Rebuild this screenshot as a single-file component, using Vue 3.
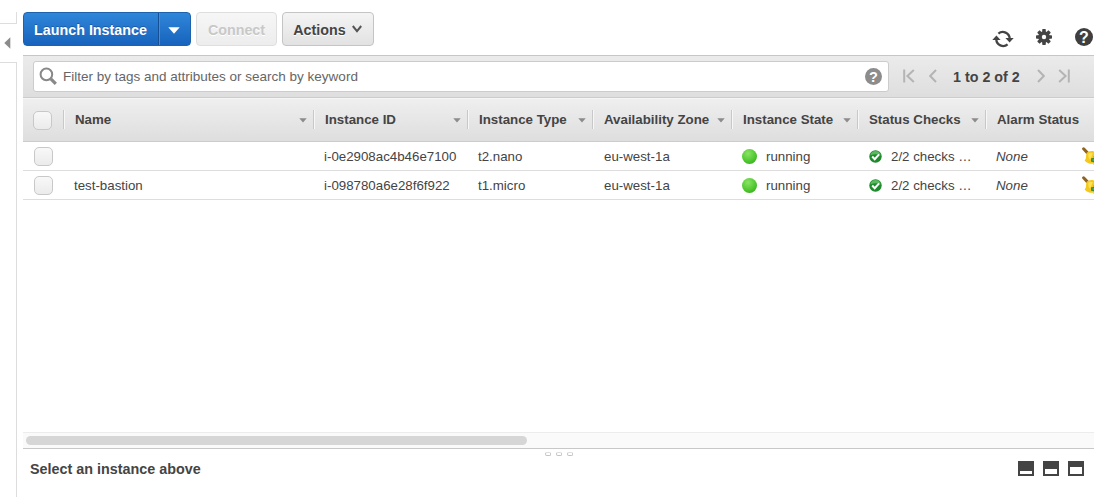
<script setup>
import { ref } from "vue"

const keyword = ref("")
const allChecked = ref(false)

// Table columns, widths in px
const columns = [
  { key: "name", title: "Name", width: 250, sortable: true },
  { key: "id", title: "Instance ID", width: 154, sortable: true },
  { key: "type", title: "Instance Type", width: 125, sortable: true },
  { key: "zone", title: "Availability Zone", width: 139, sortable: true },
  { key: "state", title: "Instance State", width: 126, sortable: true },
  { key: "checks", title: "Status Checks", width: 128, sortable: true },
  { key: "alarm", title: "Alarm Status", width: 160, sortable: false },
]

const instances = ref([
  {
    name: "",
    id: "i-0e2908ac4b46e7100",
    type: "t2.nano",
    zone: "eu-west-1a",
    state: "running",
    checks: "2/2 checks …",
    alarm: "None",
    checked: false,
  },
  {
    name: "test-bastion",
    id: "i-098780a6e28f6f922",
    type: "t1.micro",
    zone: "eu-west-1a",
    state: "running",
    checks: "2/2 checks …",
    alarm: "None",
    checked: false,
  },
])

function toggleAll() {
  instances.value.forEach((it) => (it.checked = allChecked.value))
}
</script>

<template>
  <div class="console">
    <!-- Collapsed side navigation -->
    <aside class="rail">
      <div class="rail-top"></div>
      <button class="rail-handle" type="button" aria-label="Expand">
        <svg width="7" height="12" viewBox="0 0 7 12"><path d="M6.3 0.3v11.4L0.3 6z" fill="#8b8b8b" /></svg>
      </button>
      <div class="rail-rest"></div>
    </aside>

    <main class="main">
      <!-- Toolbar -->
      <div class="toolbar">
        <div class="split-btn">
          <button class="btn-launch" type="button">Launch Instance</button>
          <button class="btn-launch-menu" type="button" aria-label="More">
            <svg width="12" height="7" viewBox="0 0 12 7"><path d="M0.3 0.3h11.4L6 6.7z" fill="#fff" /></svg>
          </button>
        </div>
        <button class="btn btn-disabled" type="button" disabled>Connect</button>
        <button class="btn btn-actions" type="button">
          Actions
          <svg width="10" height="8" viewBox="0 0 10 8"><path d="M0.8 1L5 6.2 9.2 1" fill="none" stroke="#555" stroke-width="2" /></svg>
        </button>

        <div class="tools">
          <svg class="tool-refresh" width="22" height="18" viewBox="0 0 22 18">
            <g fill="none" stroke="#444" stroke-width="2.3">
              <path d="M6.4 3.6A6.9 6.9 0 0 1 17.7 8.6" />
              <path d="M15.6 14.4A6.9 6.9 0 0 1 4.3 9.4" />
            </g>
            <path d="M13.4 8h8.3L17.6 12.4zM0.3 10h8.3L4.4 5.6z" fill="#444" />
          </svg>
          <svg class="tool-gear" width="16" height="16" viewBox="-8 -8 16 16">
            <g fill="#444">
              <rect v-for="n in 4" :key="n" x="-1.8" y="-8" width="3.6" height="16" rx="0.8" :transform="`rotate(${n * 45})`" />
              <circle r="5.8" />
            </g>
            <circle r="2.2" fill="#fff" />
          </svg>
          <span class="help help-dark">?</span>
        </div>
      </div>

      <!-- Filter bar -->
      <div class="filter">
        <label class="search">
          <svg width="19" height="19" viewBox="0 0 19 19">
            <circle cx="7.4" cy="7.4" r="5.8" fill="none" stroke="#888" stroke-width="2" />
            <path d="M11.8 11.8l5 5" stroke="#888" stroke-width="3.2" />
          </svg>
          <input v-model="keyword" type="text" placeholder="Filter by tags and attributes or search by keyword" />
          <span class="help help-light">?</span>
        </label>
        <div class="pager">
          <svg class="pg-first" width="12" height="14" viewBox="0 0 12 14"><path d="M1.2 0.6v12.8M10.8 1L4.4 7l6.4 6" /></svg>
          <svg class="pg-prev" width="8" height="14" viewBox="0 0 8 14"><path d="M7 1L1.2 7 7 13" /></svg>
          <span class="pg-text">1 to 2 of 2</span>
          <svg class="pg-next" width="8" height="14" viewBox="0 0 8 14"><path d="M1 1l5.8 6L1 13" /></svg>
          <svg class="pg-last" width="12" height="14" viewBox="0 0 12 14"><path d="M10.8 0.6v12.8M1.2 1l6.4 6-6.4 6" /></svg>
        </div>
      </div>

      <!-- Table -->
      <div class="table">
        <div class="thead">
          <div class="check-cell">
            <input v-model="allChecked" type="checkbox" class="check" @change="toggleAll" />
          </div>
          <div v-for="col in columns" :key="col.key" class="th" :style="{ width: `${col.width}px` }">
            <span>{{ col.title }}</span>
            <svg v-if="col.sortable" width="8" height="5" viewBox="0 0 8 5"><path d="M0.3 0.3h7.4L4 4.6z" fill="#8b8b8b" /></svg>
          </div>
        </div>

        <div v-for="row in instances" :key="row.id" class="tr">
          <div class="check-cell">
            <input v-model="row.checked" type="checkbox" class="check" />
          </div>
          <div v-for="col in columns" :key="col.key" class="td" :class="`td-${col.key}`" :style="{ width: `${col.width}px` }">
            <span v-if="col.key === 'state'" class="dot"></span>
            <svg v-if="col.key === 'checks'" class="ok" width="13" height="13" viewBox="0 0 13 13">
              <circle cx="6.5" cy="6.5" r="6.2" fill="#1d8a2c" />
              <path d="M1.3 5.4a5.3 5.3 0 0 1 10.4 0C9 4 5 4 1.3 5.4z" fill="#5bb85f" />
              <path d="M3.2 6.6l2.5 2.6 4.4-4.8" fill="none" stroke="#fff" stroke-width="2.1" />
            </svg>
            <span class="value">{{ row[col.key] }}</span>
            <svg v-if="col.key === 'alarm'" class="bell" width="18" height="18" viewBox="0 0 18 18">
              <path d="M1.6 1.8L5 5.4" stroke="#8f6420" stroke-width="3" stroke-linecap="round" />
              <path d="M4.6 6C6 4 9.6 3.4 12 4.4L18 9 11 16.8C7.500 17 4.400 15.600 2.600 13.400 4.800 11.600 3.600 8.400 4.600 6z" fill="#f3c91f" />
              <path d="M6.500 6.400c1.200-1 3-.9 4.300-.2L8 12.800c-1.500-1.500-2-4.300-1.500-6.400z" fill="#ffe156" />
              <path d="M9.200 13h9M13.500 9v9" stroke="#14792a" stroke-width="3.400" />
              <path d="M10.300 13h7M13.500 10.200v6" stroke="#8fdc85" stroke-width="1.200" />
            </svg>
          </div>
        </div>

        <div class="empty"></div>
        <div class="scroll"><div class="thumb"></div></div>
      </div>

      <!-- Details panel -->
      <div class="grip"><i></i><i></i><i></i></div>
      <div class="details">
        <span class="details-title">Select an instance above</span>
        <div class="layouts">
          <span class="layout layout-min"></span>
          <span class="layout layout-mid"></span>
          <span class="layout layout-max"></span>
        </div>
      </div>
    </main>
  </div>
</template>

<style>
body {
  background: #fff;
}
</style>

<style scoped>
.console {
  width: 1094px;
  height: 497px;
  display: flex;
  overflow: hidden;
  background: #fff;
  color: #444;
  font-family: "Liberation Sans", Arial, sans-serif;
  font-size: 13.3px;
}

button,
input {
  font-family: inherit;
  margin: 0;
}

svg {
  flex: none;
  display: block;
}

/* ============ Rail ============ */
.rail {
  width: 17px;
  flex: none;
  display: flex;
  flex-direction: column;
  padding-top: 12px;
  box-sizing: border-box;
}

.rail-top {
  height: 11px;
  border-right: 1px solid #ddd;
}

.rail-handle {
  height: 40px;
  padding: 0 0 0 4px;
  border: solid #ddd;
  border-width: 1px 0;
  background: #fff;
  display: flex;
  align-items: center;
}

.rail-rest {
  flex: 1;
  border-right: 1px solid #ddd;
}

/* ============ Toolbar ============ */
.main {
  width: 1071px;
  flex: none;
  margin-left: 6px;
  display: flex;
  flex-direction: column;
}

.toolbar {
  height: 55px;
  flex: none;
  box-sizing: border-box;
  padding-top: 12px;
  display: flex;
  align-items: flex-start;
}

.split-btn {
  height: 34px;
  width: 168px;
  box-sizing: border-box;
  display: flex;
  border: 1px solid #1c62ad;
  border-radius: 4px;
  overflow: hidden;
  background: linear-gradient(#2f86d9, #1763bd);
}

.btn-launch,
.btn-launch-menu {
  border: none;
  padding: 0;
  background: transparent;
  color: #fff;
}

.btn-launch {
  width: 134px;
  font-size: 14.3px;
  font-weight: 700;
  padding: 2px 1px 0 0;
  text-shadow: 0 -1px 0 #1a5ba5;
}

.btn-launch-menu {
  flex: 1;
  display: flex;
  align-items: center;
  justify-content: center;
  padding: 2px 1px 0 0;
  border-left: 1px solid #154f94;
  box-shadow: inset 1px 0 #3f8fdc;
}

.btn {
  height: 34px;
  box-sizing: border-box;
  border: 1px solid #c4c4c4;
  border-radius: 4px;
  padding: 2px 0 0;
  background: linear-gradient(#f4f4f4, #e2e2e2);
  color: #444;
  font-size: 14.3px;
  font-weight: 700;
  display: flex;
  align-items: center;
  justify-content: center;
}

.btn-disabled {
  width: 81px;
  margin-left: 5px;
  border-color: #dedede;
  background: linear-gradient(#f6f6f6, #ededed);
  color: #c8c8c8;
  text-shadow: 0 1px 0 #fff;
}

.btn-actions {
  width: 92px;
  margin-left: 5px;
  padding-right: 1px;
  gap: 6px;
  text-shadow: 0 1px 0 #fff;
}

.btn-actions svg {
  margin-top: -3px;
}

.tools {
  margin-left: auto;
  margin-right: 1px;
  padding-top: 16px;
  display: flex;
  align-items: center;
}

.tool-refresh {
  margin-right: 22px;
  margin-top: 2px;
}

.tool-gear {
  margin-right: 23px;
  margin-top: -2px;
}

.help {
  flex: none;
  border-radius: 50%;
  color: #fff;
  font-weight: 700;
  text-align: center;
}

.help-dark {
  width: 18px;
  height: 18px;
  margin-top: -2px;
  line-height: 19px;
  font-size: 16px;
  background: #3f3f3f;
}

.help-light {
  width: 17px;
  height: 17px;
  line-height: 18px;
  font-size: 14.5px;
  background: #8c8c8c;
}

/* ============ Filter ============ */
.filter {
  height: 42px;
  flex: none;
  box-sizing: border-box;
  border-top: 1px solid #c6c6c6;
  padding: 5px 0 0 10px;
  background: linear-gradient(#ebebeb, #dedede);
  display: flex;
  align-items: flex-start;
}

.search {
  width: 856px;
  height: 31px;
  box-sizing: border-box;
  border: 1px solid #ccc;
  border-radius: 3px;
  background: #fff;
  display: flex;
  align-items: center;
  padding: 0 6px 0 5px;
}

.search input {
  flex: 1;
  border: none;
  outline: none;
  padding: 0;
  margin-left: 5px;
  background: transparent;
  font-size: 13.5px;
  color: #444;
}

.search input::placeholder {
  color: #666;
  opacity: 1;
}

.pager {
  height: 31px;
  display: flex;
  align-items: center;
  padding-left: 14px;
}

.pager svg {
  fill: none;
  stroke: #b4b4b4;
  stroke-width: 2;
  margin-top: -1px;
}

.pg-prev {
  margin-left: 14px;
}

.pg-text {
  margin: 1px 17px 0 16px;
  width: 67px;
  white-space: nowrap;
  font-size: 14.3px;
  font-weight: 700;
}

.pg-last {
  margin-left: 13px;
}

/* ============ Table ============ */
.table {
  flex: none;
  height: 352px;
  display: flex;
  flex-direction: column;
  overflow: hidden;
}

.thead {
  height: 45px;
  flex: none;
  box-sizing: border-box;
  border-top: 1px solid #ccc;
  border-bottom: 1px solid #ccc;
  box-shadow: inset 0 1px #f5f5f5;
  background: linear-gradient(#efefef, #dedede);
  display: flex;
  align-items: center;
}

.check-cell {
  width: 40px;
  flex: none;
  display: flex;
  padding-left: 10px;
  box-sizing: border-box;
}

.check {
  appearance: none;
  width: 19px;
  height: 19px;
  border: 1px solid #c8c8c8;
  border-radius: 5px;
  background: linear-gradient(#f8f8f8, #ebebeb);
}

.thead .check {
  margin-top: 2px;
}

.check:checked {
  background: #2f86d9;
}

.th {
  flex: none;
  height: 19px;
  box-sizing: border-box;
  border-left: 1px solid #c8c8c8;
  box-shadow: inset 1px 0 #f7f7f7;
  padding: 0 6px 0 11px;
  display: flex;
  align-items: center;
  justify-content: space-between;
  font-weight: 700;
  white-space: nowrap;
}

.th svg {
  margin-top: 1px;
}

.tr {
  height: 29px;
  flex: none;
  box-sizing: border-box;
  border-bottom: 1px solid #ddd;
  display: flex;
  align-items: center;
}

.tr .check {
  margin-left: 1px;
}

.td {
  flex: none;
  box-sizing: border-box;
  padding-left: 11px;
  display: flex;
  align-items: center;
  white-space: nowrap;
  line-height: 18px;
}

.value {
  padding-top: 1px;
}

.td-zone {
  padding-left: 12px;
}

.td-state .value {
  margin-left: 1px;
}

.td-alarm {
  font-style: italic;
}

.dot {
  width: 15px;
  height: 15px;
  margin-right: 8px;
  border-radius: 50%;
  background: radial-gradient(circle at 40% 30%, #8be365, #4fc82f 55%, #2f9a1b 100%);
}

.ok {
  margin-right: 9px;
  margin-left: 1px;
}

.bell {
  margin-left: 54px;
}

.empty {
  flex: 1;
}

.scroll {
  height: 17px;
  flex: none;
  box-sizing: border-box;
  padding: 3px 3px 0;
  border-top: 1px solid #ececec;
  border-bottom: 1px solid #c8c8c8;
  background: #fafafa;
}

.thumb {
  width: 501px;
  height: 9px;
  border-radius: 5px;
  background: #d6d6d6;
}

/* ============ Details ============ */
.grip {
  height: 12px;
  flex: none;
  display: flex;
  justify-content: center;
  gap: 5px;
  padding: 3px 0 0;
  box-sizing: border-box;
}

.grip i {
  width: 6px;
  height: 4px;
  box-sizing: border-box;
  border: 1px solid #c2c2c2;
  border-top-color: #ddd;
  border-radius: 2px;
}

.details {
  flex: none;
  display: flex;
  justify-content: space-between;
  padding: 0 10px 0 7px;
}

.details-title {
  font-size: 14.35px;
  font-weight: 700;
  line-height: 16px;
}

.layouts {
  display: flex;
  gap: 9px;
}

.layout {
  width: 16px;
  height: 15px;
  box-sizing: border-box;
  border: 2px solid #444;
  background: #fff;
}

.layout-min {
  border-top-width: 10px;
}

.layout-mid {
  border-top-width: 8px;
}

.layout-max {
  border-top-width: 6px;
}
</style>
